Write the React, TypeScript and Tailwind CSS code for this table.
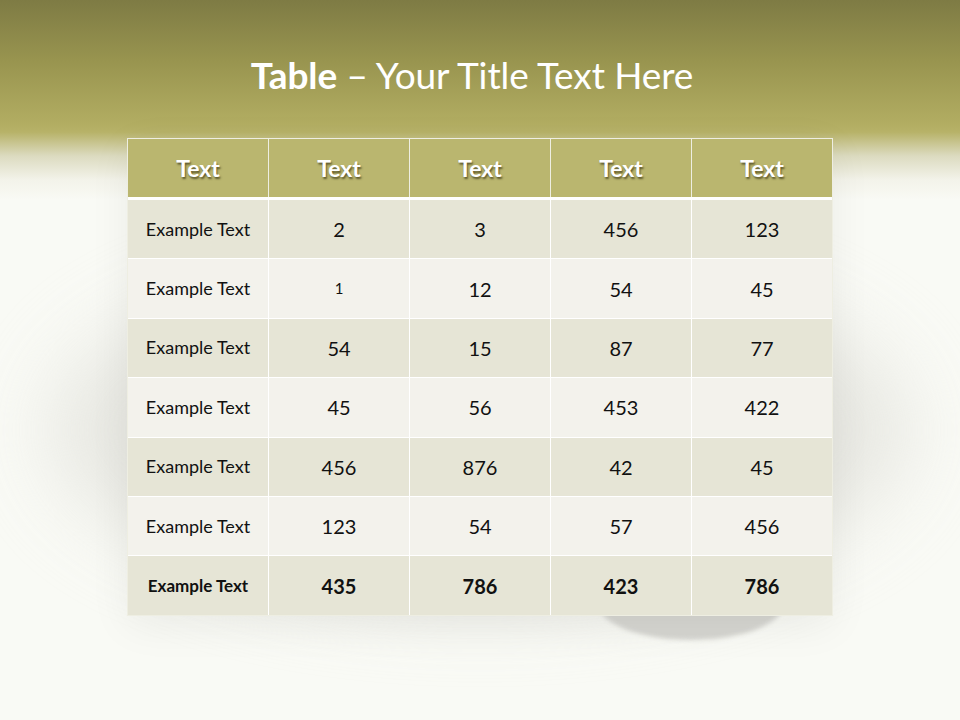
import React from 'react';

const rows: string[][] = [
  ['Example Text', '2', '3', '456', '123'],
  ['Example Text', '1', '12', '54', '45'],
  ['Example Text', '54', '15', '87', '77'],
  ['Example Text', '45', '56', '453', '422'],
  ['Example Text', '456', '876', '42', '45'],
  ['Example Text', '123', '54', '57', '456'],
];

const total = ['Example Text', '435', '786', '423', '786'];

export default function App() {
  return (
    <div className="relative w-[960px] h-[720px] overflow-hidden bg-[#f9faf5] font-['Lato','Open_Sans',sans-serif]">
      {/* olive band at the top */}
      <div className="absolute inset-x-0 top-0 h-[200px] bg-[linear-gradient(to_bottom,#7e7b44_0%,#98944f_30%,#b2ad62_62%,#b7b268_66%,#dcdbc0_78%,#f3f3ea_90%,#f9faf5_100%)]" />
      {/* soft shadow and pedestal under the table */}
      <div className="absolute left-[50px] top-[260px] w-[860px] h-[340px] rounded-[50%] bg-[#e2e2dc] blur-[40px] opacity-80" />
      <div className="absolute left-[598px] top-[566px] w-[186px] h-[74px] rounded-[50%] bg-[#d5d5d0] blur-[2px]" />

      <div className="relative flex flex-col items-center">
        <h1 className="mt-[50px] mr-[16px] h-[50px] text-[37px] leading-[50px] text-white tracking-[-0.1px]">
          <span className="font-bold">Table</span> – Your Title Text Here
        </h1>

        <div className="mt-[38px] w-[706px] border border-[#eeeee2] bg-white shadow-[0_10px_40px_rgba(0,0,0,0.06)]">
          <div className="grid grid-cols-5 gap-px bg-[#eeeee2]">
            {['Text', 'Text', 'Text', 'Text', 'Text'].map((h, i) => (
              <div
                key={i}
                className="h-[58px] flex items-center justify-center bg-[#bab66f] text-white font-bold text-[23px] [text-shadow:1px_2px_2px_rgba(60,55,20,0.75)]"
              >
                {h}
              </div>
            ))}
          </div>
          <div className="mt-[3px] grid grid-cols-5 gap-px bg-white">
            {rows.map((r, ri) =>
              r.map((c, ci) => (
                <div
                  key={`${ri}-${ci}`}
                  className={`h-[58.4px] flex items-center justify-center text-[#111] ${
                    ri % 2 === 0 ? 'bg-[#e6e5d6]' : 'bg-[#f3f2ec]'
                  } ${ci === 0 ? 'text-[18px]' : ri === 1 && ci === 1 ? 'text-[15px]' : 'text-[20px]'}`}
                >
                  {c}
                </div>
              ))
            )}
            {total.map((c, ci) => (
              <div
                key={`t-${ci}`}
                className={`h-[58.4px] flex items-center justify-center bg-[#e6e5d6] text-[#111] font-bold ${
                  ci === 0 ? 'text-[17px]' : 'text-[20px]'
                }`}
              >
                {c}
              </div>
            ))}
          </div>
        </div>
      </div>
    </div>
  );
}
